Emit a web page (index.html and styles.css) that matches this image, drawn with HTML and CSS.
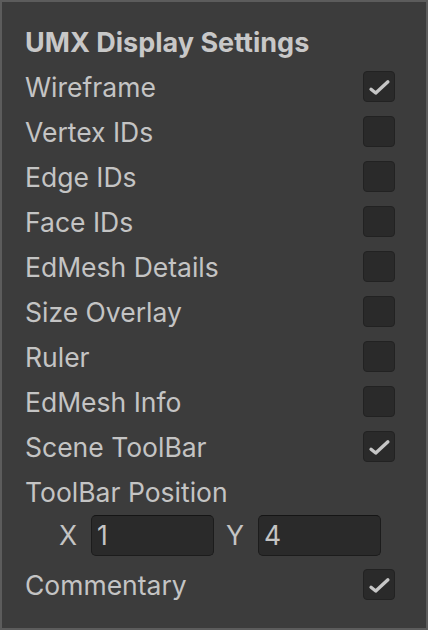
FILE: index.html
```html
<!DOCTYPE html>
<html>
<head>
<meta charset="utf-8">
<link rel="stylesheet" href="styles.css">
</head>
<body>
<div class="panel">
  <div class="heading">UMX Display Settings</div>
  <div class="row"><span class="label">Wireframe</span><span class="check on"><svg viewBox="0 0 32 31"><path d="M7.5 18.5 L12.5 22.5 L25.5 10.5"/></svg></span></div>
  <div class="row"><span class="label">Vertex IDs</span><span class="check"></span></div>
  <div class="row"><span class="label">Edge IDs</span><span class="check"></span></div>
  <div class="row"><span class="label">Face IDs</span><span class="check"></span></div>
  <div class="row"><span class="label">EdMesh Details</span><span class="check"></span></div>
  <div class="row"><span class="label">Size Overlay</span><span class="check"></span></div>
  <div class="row"><span class="label">Ruler</span><span class="check"></span></div>
  <div class="row"><span class="label">EdMesh Info</span><span class="check"></span></div>
  <div class="row"><span class="label">Scene ToolBar</span><span class="check on"><svg viewBox="0 0 32 31"><path d="M7.5 18.5 L12.5 22.5 L25.5 10.5"/></svg></span></div>
  <div class="row"><span class="label">ToolBar Position</span></div>
  <div class="xy">
    <span class="axis">X</span><span class="field">1</span>
    <span class="axis">Y</span><span class="field">4</span>
  </div>
  <div class="row"><span class="label">Commentary</span><span class="check on"><svg viewBox="0 0 32 31"><path d="M7.5 18.5 L12.5 22.5 L25.5 10.5"/></svg></span></div>
</div>
</body>
</html>
```
FILE: styles.css
```css
html, body {
  margin: 0;
  padding: 0;
  background: #3c3c3c;
}
.panel {
  box-sizing: border-box;
  width: 428px;
  height: 630px;
  border: 2px solid #5c5c5c;
  background: #3c3c3c;
  padding: 18px 31px 0 23px;
  font-family: Inter, "Noto Sans", sans-serif;
  color: #c4c4c4;
}
.heading {
  height: 44px;
  display: flex;
  align-items: center;
  font-size: 27px;
  font-weight: 700;
  color: #c8c8c8;
}
.row {
  height: 45px;
  display: flex;
  align-items: center;
  justify-content: space-between;
}
.label {
  font-size: 26.5px;
  font-weight: 400;
}
.check {
  box-sizing: border-box;
  width: 32px;
  height: 31px;
  border-radius: 4px;
  background: #2a2a2a;
  border: 1px solid #222222;
  display: flex;
}
.check svg {
  width: 100%;
  height: 100%;
}
.check path {
  fill: none;
  stroke: #c6c6c6;
  stroke-width: 3.6;
  stroke-linecap: round;
  stroke-linejoin: round;
}
.xy {
  height: 48px;
  display: flex;
  align-items: flex-start;
  padding-top: 1px;
  box-sizing: border-box;
  padding-left: 34px;
}
.axis {
  font-size: 26.5px;
  height: 41px;
  line-height: 41px;
  width: 32px;
}
.field {
  box-sizing: border-box;
  width: 123px;
  height: 41px;
  line-height: 39px;
  background: #2a2a2a;
  border: 1px solid #1c1c1c;
  border-top-color: #151515;
  border-radius: 5px;
  padding-left: 5px;
  font-size: 26.5px;
  margin-right: 12px;
}
```
